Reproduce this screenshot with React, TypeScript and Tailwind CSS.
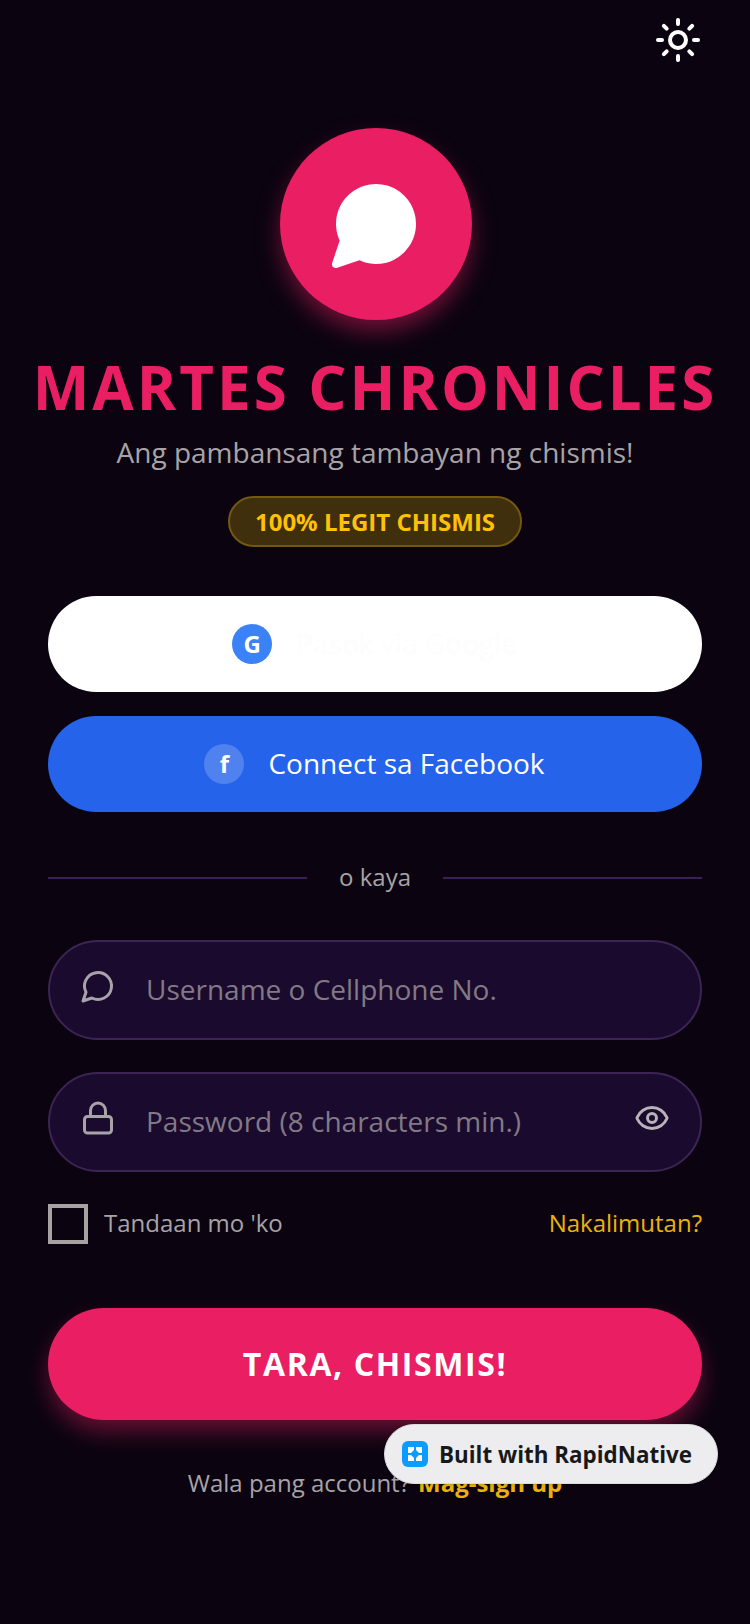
import { Eye, Lock, Sun } from 'lucide-react';

function ChatIcon({ size, color, fill, className }: { size: number; color: string; fill: string; className?: string }) {
  return (
    <svg
      width={size}
      height={size}
      viewBox="0 0 24 24"
      fill={fill}
      stroke={color}
      strokeWidth="2"
      strokeLinecap="round"
      strokeLinejoin="round"
      className={className}
    >
      <path d="M7.9 20A9 9 0 1 0 4 16.1L2 22Z" />
    </svg>
  );
}

export default function App() {
  return (
    <div className="relative min-h-[1624px] bg-[#0b0410] px-12 font-['Open_Sans',sans-serif]">
      {/* TOP */}
      <div className="flex justify-end pt-4">
        <Sun size={48} color="#ffffff" />
      </div>

      <div className="flex flex-col items-center">
        <div className="ml-0.5 mt-16 flex h-48 w-48 items-center justify-center rounded-full bg-[#e91e63] shadow-[0_12px_24px_-2px_rgba(233,30,99,0.5)]">
          <ChatIcon size={96} color="#ffffff" fill="#ffffff" />
        </div>

        <h1 className="mt-[26px] whitespace-nowrap text-[60px] font-bold leading-[82px] tracking-[3px] text-[#e91e63]">
          MARTES CHRONICLES
        </h1>

        <p className="mt-[5px] text-[28px] leading-[38px] text-[#a8a3a8]">
          Ang pambansang tambayan ng chismis!
        </p>

        <div className="mt-[25px] rounded-full border-2 border-[#735714] bg-[#3f2f0d] px-[25px] py-[7px] text-[24px] font-bold leading-[33px] text-[#ffc107]">
          100% LEGIT CHISMIS
        </div>
      </div>

      {/* SOCIAL */}
      <div className="mt-[49px] flex h-24 items-center justify-center gap-6 rounded-full bg-white">
        <div className="flex h-10 w-10 items-center justify-center rounded-full bg-[#3b82f6] text-[24px] font-bold text-white">
          G
        </div>
        <span className="mr-px pb-0.5 text-[28px] text-[#fdfdfd]">Pasok via Google</span>
      </div>

      <div className="mt-6 flex h-24 items-center justify-center gap-6 rounded-full bg-[#2563eb]">
        <div className="flex h-10 w-10 items-center justify-center rounded-full bg-white/20 text-[24px] font-bold text-white">
          f
        </div>
        <span className="mr-px pb-0.5 text-[28px] text-white">Connect sa Facebook</span>
      </div>

      {/* DIVIDER */}
      <div className="mt-12 flex items-center gap-8">
        <div className="h-0.5 flex-1 bg-[#3a2055]"></div>
        <span className="pb-0.5 text-[24px] leading-[33px] text-[#a8a3a8]">o kaya</span>
        <div className="h-0.5 flex-1 bg-[#3a2055]"></div>
      </div>

      {/* FORM */}
      <div className="mt-[45px] flex h-[100px] items-center gap-[30px] rounded-full border-2 border-[#3d2456] bg-[#1a0a2e] pl-[30px] pr-[30px]">
        <ChatIcon size={36} color="#a8a3a8" fill="none" className="mb-2 shrink-0" />
        <input
          placeholder="Username o Cellphone No."
          className="mb-0.5 min-w-0 flex-1 bg-transparent text-[28px] text-white outline-none placeholder:text-[#827a84]"
        />
      </div>

      <div className="mt-8 flex h-[100px] items-center gap-[30px] rounded-full border-2 border-[#3d2456] bg-[#1a0a2e] pl-[30px] pr-[30px]">
        <Lock size={36} color="#a8a3a8" className="mb-2 shrink-0" />
        <input
          placeholder="Password (8 characters min.)"
          className="mb-0.5 min-w-0 flex-1 bg-transparent text-[28px] text-white outline-none placeholder:text-[#827a84]"
        />
        <Eye size={36} color="#b8b3b8" className="mb-2 shrink-0" />
      </div>

      <div className="mt-8 flex items-center justify-between">
        <div className="flex items-center gap-4">
          <div className="h-10 w-10 border-4 border-[#a8a3a3]"></div>
          <span className="pb-0.5 text-[24px] text-[#a8a3a8]">Tandaan mo 'ko</span>
        </div>
        <span className="pb-0.5 text-[24px] text-[#eab308]">Nakalimutan?</span>
      </div>

      <div className="mt-16 flex h-28 items-center justify-center rounded-full bg-[#e91e63] text-[32px] font-bold tracking-[1.6px] text-white shadow-[0_12px_24px_-2px_rgba(233,30,99,0.45)]">
        TARA, CHISMIS!
      </div>

      <div className="mt-[46px] flex items-center justify-center gap-2 text-[24px] leading-[33px]">
        <span className="text-[#a8a3a8]">Wala pang account?</span>
        <span className="font-bold text-[#eab308]">Mag-sign up</span>
      </div>

      {/* BADGE */}
      <div className="absolute left-[384px] top-[1424px] flex h-[60px] w-[334px] items-center gap-[11px] rounded-full border border-[#dcdadd] bg-[#edecee] pl-[17px] shadow-sm">
        <div className="flex h-[26px] w-[26px] items-center justify-center rounded-md bg-[#0a9dff]">
          <svg width="16" height="16" viewBox="0 0 16 16" fill="#ffffff">
            <path d="M1 1h6v3L4 7H1z" />
            <path d="M9 1h6v6h-3L9 4z" />
            <path d="M1 9h3l3 3v3H1z" />
            <path d="M12 9h3v6H9v-3z" />
          </svg>
        </div>
        <span className="text-[22.4px] font-bold leading-[33px] text-[#18181b]">Built with RapidNative</span>
      </div>
    </div>
  );
}
